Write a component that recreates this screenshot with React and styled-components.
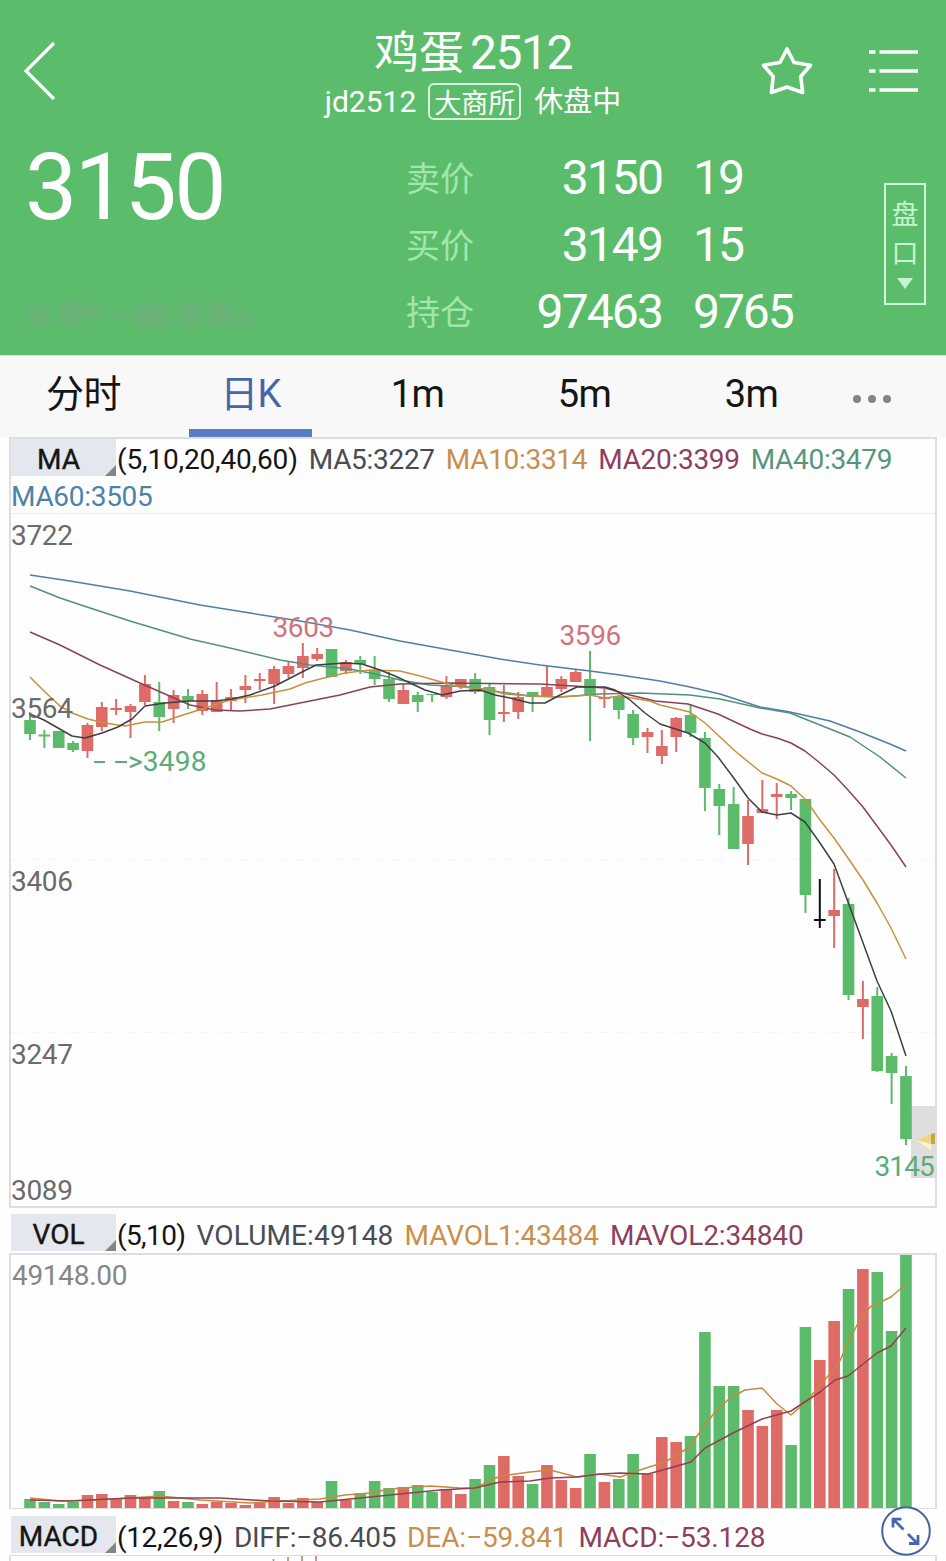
import React, { useState } from "react";
import styled, { createGlobalStyle } from "styled-components";

const UP = "#df6b66";
const DOWN = "#5bbb6b";
const FLAT = "#111111";

// 한 칸 간격과 첫 번째 봉의 x 좌표
const STEP = 14.36;
const FIRST_X = 30;
const barX = (i) => FIRST_X + STEP * i;

// [색, 몸통 위, 몸통 아래, 꼬리 위, 꼬리 아래, 거래량 막대 위]
const bars = [
  ["g", 720, 734, 714, 740, 1499],
  ["g", 734.5, 736.5, 730, 748, 1502],
  ["g", 731, 748, 731, 748, 1504],
  ["g", 743, 750, 741, 752, 1502],
  ["r", 725, 751, 723, 758, 1495],
  ["r", 707, 727, 702, 731, 1494],
  ["r", 708, 710, 699, 715, 1499],
  ["r", 706, 712, 704, 738, 1495],
  ["r", 684, 702, 675, 705, 1498],
  ["g", 702, 717, 682, 731, 1491],
  ["r", 695, 709, 690, 723, 1501],
  ["g", 696, 701, 689, 709, 1502],
  ["r", 694, 711, 690, 715, 1504],
  ["r", 700, 712, 682, 712, 1502],
  ["r", 697, 701, 689, 711, 1503],
  ["r", 686, 690, 675, 703, 1505],
  ["r", 679, 681, 673, 690, 1503],
  ["r", 669, 684, 666, 704, 1497],
  ["r", 666, 674, 661, 678, 1503],
  ["r", 656, 668, 643, 678, 1498],
  ["r", 654, 659, 648, 661, 1502],
  ["g", 649, 677, 649, 677, 1481],
  ["r", 662, 671, 660, 674, 1500],
  ["g", 660, 664, 656, 674, 1493],
  ["g", 671, 679, 656, 685, 1481],
  ["g", 679, 699, 672, 702, 1488],
  ["r", 690, 704, 684, 704, 1487],
  ["g", 695, 702, 692, 712, 1485],
  ["g", 694, 695, 694, 702, 1492],
  ["r", 686, 697, 676, 699, 1489],
  ["r", 679, 687, 679, 689, 1494],
  ["g", 679, 692, 673, 694, 1479],
  ["g", 687, 720, 683, 735, 1465],
  ["r", 712, 714, 685, 722, 1456],
  ["r", 697, 712, 692, 719, 1476],
  ["g", 692, 697, 692, 712, 1484],
  ["r", 687, 697, 666, 697, 1465],
  ["r", 679, 689, 676, 692, 1480],
  ["r", 672, 682, 670, 682, 1488],
  ["g", 679, 695, 651, 741, 1454],
  ["r", 697, 699, 689, 708, 1482],
  ["g", 696, 710, 695, 719, 1479],
  ["g", 714, 738, 710, 745, 1454],
  ["r", 732, 737, 728, 753, 1474],
  ["r", 746, 756, 730, 764, 1437],
  ["r", 718, 737, 717, 752, 1442],
  ["g", 715, 733, 704, 737, 1436],
  ["g", 738, 788, 732, 811, 1332],
  ["g", 789, 806, 784, 835, 1386],
  ["g", 804, 849, 787, 849, 1386],
  ["r", 816, 844, 800, 865, 1410],
  ["r", 809, 813, 780, 813, 1426],
  ["r", 794, 797, 783, 819, 1410],
  ["g", 794, 798, 791, 810, 1445],
  ["g", 799, 895, 799, 913, 1327],
  ["k", 919, 921, 879, 928, 1360],
  ["r", 910, 916, 869, 948, 1321],
  ["g", 904, 995, 898, 1000, 1289],
  ["r", 999, 1007, 981, 1039, 1269],
  ["g", 996, 1071, 987, 1072, 1272],
  ["g", 1056, 1073, 1053, 1104, 1331],
  ["g", 1076, 1139, 1066, 1145, 1255],
];

const candleColor = { g: DOWN, r: UP, k: FLAT };
const volumeColor = { g: DOWN, r: UP, k: UP };

const maLines = [
  {
    color: "#4f7fa8",
    points:
      "30,575 70,581 130,591 145,594 200,605 250,613 300,621 350,630 400,641 450,650 500,659 540,665 590,671 620,675 660,681 690,687 720,694 760,707 790,712 830,721 860,732 890,744 906,751",
  },
  {
    color: "#52917f",
    points:
      "30,586 60,598 90,608 130,621 160,630 190,639 230,648 280,660 310,665 350,669 380,675 400,680 430,685 470,687 500,692 530,696 560,697 600,694 640,693 690,695 720,699 760,708 790,713 820,725 850,737 880,757 906,778",
  },
  {
    color: "#8a4257",
    points:
      "30,632 60,645 100,665 140,683 165,694 190,705 215,710 240,711 270,709 290,705 310,701 340,695 370,687 400,684 450,683 540,684 590,687 605,688 630,695 655,701 688,704 718,714 750,729 762,734 777,738 791,743 805,751 820,763 834,775 848,790 863,807 877,826 891,845 906,867",
  },
  {
    color: "#c8913e",
    points:
      "30,677 45,692 60,706 72,713 88,719 105,723 125,726 145,722 162,722 180,716 205,708 230,700 262,695 290,689 305,683 320,679 345,673 370,670 400,671 420,676 445,683 460,687 475,688 490,690 505,694 530,696 560,697 590,695 605,698 620,696 650,701 660,705 690,712 705,723 720,737 735,751 762,773 777,779 791,786 805,799 820,820 834,838 848,858 863,880 877,903 891,928 906,959",
  },
  {
    color: "#3d4048",
    points:
      "30,714 44,720 58,728 72,736 85,738 102,733 118,727 132,719 145,706 165,703 190,701 215,701 232,699 250,695 275,686 300,673 316,665 345,663 362,664 380,670 395,676 410,683 425,690 442,695 460,691 480,690 495,695 510,698 530,703 545,703 560,695 577,687 605,687 615,690 630,700 645,713 660,724 688,733 705,743 718,757 733,777 748,798 762,812 777,815 791,813 805,822 820,843 834,864 848,902 862,940 877,981 891,1011 906,1056",
  },
];

const volumeLines = [
  {
    color: "#c88a3e",
    points:
      "30,1498 60,1501 100,1500 160,1496 200,1500 250,1503 280,1501 320,1499 345,1495 370,1493 390,1489 430,1486 460,1488 475,1488 500,1476 530,1472 550,1470 577,1477 600,1474 620,1477 640,1470 665,1462 688,1448 700,1432 715,1412 730,1398 745,1390 762,1388 777,1404 791,1415 805,1403 820,1385 838,1365 848,1343 858,1323 870,1307 891,1297 906,1284",
  },
  {
    color: "#93404d",
    points:
      "30,1500 70,1501 130,1498 220,1498 270,1501 320,1502 350,1499 400,1494 440,1490 475,1488 500,1482 530,1481 550,1478 577,1477 600,1474 620,1473 648,1474 670,1468 691,1462 705,1448 735,1432 762,1419 791,1411 820,1392 835,1380 848,1376 877,1353 891,1346 906,1328",
  },
];

const quotes = [
  { label: "卖价", price: "3150", count: "19" },
  { label: "买价", price: "3149", count: "15" },
  { label: "持仓", price: "97463", count: "9765" },
];

const tabs = ["分时", "日K", "1m", "5m", "3m"];

const Header = () => {
  return (
    <HeaderContainer>
      <NavBar>
        <BackButton aria-label="back">
          <svg width="36" height="62" viewBox="0 0 36 62">
            <path
              d="M32 3 L4 31 L32 59"
              fill="none"
              stroke="#fff"
              strokeWidth="3.2"
            />
          </svg>
        </BackButton>
        <TitleBox>
          <Title>
            <TitleName>鸡蛋</TitleName>
            <TitleNumber>2512</TitleNumber>
          </Title>
          <SubTitle>
            <Code>jd2512</Code>
            <Exchange>大商所</Exchange>
            <span>休盘中</span>
          </SubTitle>
        </TitleBox>
        <NavIcons>
          <svg width="54" height="52" viewBox="0 0 54 52">
            <path
              d="M27 4 L34 17.5 L50.5 20.3 L40.8 31.5 L42.6 47.5 L27 42 L11.4 47.5 L13.2 31.5 L3.5 20.3 L20 17.5 Z"
              fill="none"
              stroke="#fff"
              strokeWidth="3.6"
              strokeLinejoin="round"
            />
          </svg>
          <svg width="50" height="44" viewBox="0 0 50 44">
            <path
              d="M1 3H7.500M11.500 3H50M1 22H7.500M11.500 22H50M1 41H7.500M11.500 41H50"
              stroke="#fff"
              strokeWidth="3.6"
            />
          </svg>
        </NavIcons>
      </NavBar>
      <QuoteBox>
        <LastPriceBox>
          <LastPrice>3150</LastPrice>
          <svg width="240" height="46" viewBox="0 0 240 46">
            <filter id="smudge">
              <feGaussianBlur stdDeviation="3.5" />
            </filter>
            <g filter="url(#smudge)" fill="#6fae7d" opacity="0.75">
              <path d="M2 12l24 2 -4 22 -18 -4zM34 10l20 -2 6 12 -8 16 -20 -2zM58 13h22v8l-16 8zM82 20h26v6h-26zM108 14l32 -4 6 24 -34 2zM152 12l24 -2 -2 24 -18 2zM182 9l24 2 4 26 -26 -2zM212 18l18 6 -2 10 -16 2z" />
            </g>
          </svg>
        </LastPriceBox>
        <QuoteTable>
          {quotes.map((quote) => (
            <QuoteRow key={quote.label}>
              <QuoteLabel>{quote.label}</QuoteLabel>
              <QuotePrice>{quote.price}</QuotePrice>
              <QuoteCount>{quote.count}</QuoteCount>
            </QuoteRow>
          ))}
        </QuoteTable>
        <DepthButton>
          <span>盘</span>
          <span>口</span>
          <svg width="16" height="11" viewBox="0 0 16 11">
            <path d="M0 0H16L8 11Z" fill="#c4f5cd" />
          </svg>
        </DepthButton>
      </QuoteBox>
    </HeaderContainer>
  );
};

const Lines = ({ lines }) =>
  lines.map((line) => (
    <polyline
      key={line.color}
      points={line.points}
      fill="none"
      stroke={line.color}
      strokeWidth="1.5"
      strokeLinejoin="round"
    />
  ));

const PriceChart = () => {
  return (
    <ChartSvg width="924" height="692" viewBox="11 514 924 692">
      <g stroke="#f5f5f5" strokeDasharray="9 10">
        <path d="M11 859.500H935M11 1032.500H935" />
      </g>
      <rect x="911" y="1106" width="24" height="72" fill="#dedede" />
      {bars.map(([type, top, bottom, high, low], i) => (
        <g key={i} fill={candleColor[type]}>
          <rect x={barX(i) - 1} y={high} width="2" height={low - high} />
          <rect x={barX(i) - 5.8} y={top} width="11.6" height={bottom - top} />
        </g>
      ))}
      <Lines lines={maLines} />
      <path d="M916 1140 L931 1134 V1150 Z" fill="#fbf3d2" />
      <path d="M916 1140 L931 1134 V1144 Z" fill="#ecd680" />
      <path d="M931 1134 L935 1133 V1144 L931 1144 Z" fill="#c9a545" />
      <AxisText x="11" y="545">3722</AxisText>
      <AxisText x="11" y="718">3564</AxisText>
      <AxisText x="11" y="891">3406</AxisText>
      <AxisText x="11" y="1064">3247</AxisText>
      <AxisText x="11" y="1200">3089</AxisText>
      <MarkText x="272.500" y="637" $color="#d0737a">3603</MarkText>
      <MarkText x="559.500" y="645" $color="#d0737a">3596</MarkText>
      <path d="M94 762H105M115 762H127" stroke="#5cab78" strokeWidth="2" />
      <MarkText x="128" y="771" $color="#5cab78" $spacing={0.2}>&gt;3498</MarkText>
      <MarkText x="874.500" y="1176" $color="#5cab78" $spacing={-0.9}>3145</MarkText>
    </ChartSvg>
  );
};

const VolumeChart = () => {
  return (
    <ChartSvg width="924" height="253" viewBox="11 1255 924 253">
      {bars.map(([type, , , , , top], i) => (
        <rect
          key={i}
          x={barX(i) - 5.8}
          y={top}
          width="11.6"
          height={1508 - top}
          fill={volumeColor[type]}
        />
      ))}
      <Lines lines={volumeLines} />
      <VolumeText x="12" y="1285">49148.00</VolumeText>
    </ChartSvg>
  );
};

const App = () => {
  const [tab, setTab] = useState("日K");

  return (
    <>
      <GlobalStyle />
      <PageContainer>
        <Header />
        <TabBar>
          {tabs.map((name) => (
            <Tab key={name} $active={name === tab} onClick={() => setTab(name)}>
              {name}
            </Tab>
          ))}
          <MoreButton aria-label="more">
            <Dot />
            <Dot />
            <Dot />
          </MoreButton>
        </TabBar>

        <PricePanel>
          <Legend>
            <Chip>MA</Chip>
            <Param $spacing={-0.15}>(5,10,20,40,60)</Param>
            <Value $color="#4a4c55">MA5:3227</Value>
            <Value $color="#c98f4c">MA10:3314</Value>
            <Value $color="#8e3f5e">MA20:3399</Value>
            <Value $color="#57957f">MA40:3479</Value>
            <Value $color="#4d82a8" $first>MA60:3505</Value>
          </Legend>
          <PriceChart />
        </PricePanel>

        <OuterLegend>
          <Chip>VOL</Chip>
          <Param $spacing={-0.6}>(5,10)</Param>
          <Value $color="#4a4c55" $spacing={0.15}>VOLUME:49148</Value>
          <Value $color="#c98f4c" $spacing={-0.05}>MAVOL1:43484</Value>
          <Value $color="#8e3f5e" $spacing={-0.1}>MAVOL2:34840</Value>
        </OuterLegend>
        <VolumePanel>
          <VolumeChart />
        </VolumePanel>

        <OuterLegend $top={7}>
          <Chip>MACD</Chip>
          <Param $spacing={-0.35}>(12,26,9)</Param>
          <Value $color="#4a4c55">DIFF:−86.405</Value>
          <Value $color="#c98f4c" $spacing={-0.1}>DEA:−59.841</Value>
          <Value $color="#8e3f5e" $spacing={-0.1}>MACD:−53.128</Value>
          <ExpandButton aria-label="expand">
            <svg width="50" height="50" viewBox="0 0 50 50">
              <circle
                cx="25"
                cy="25"
                r="23.8"
                fill="#fff"
                stroke="#4a62a3"
                strokeWidth="2"
              />
              <path
                d="M22.500 23.500 L13 14M12 21.500V13.200H20.500M27 28L36 37M37 29V37.500H28"
                fill="none"
                stroke="#4766b0"
                strokeWidth="2.8"
              />
            </svg>
          </ExpandButton>
        </OuterLegend>
        <MacdPanel>
          <svg width="924" height="5" viewBox="11 1556 924 5">
            <path
              d="M273.500 1559V1561M288 1557V1561M302 1556V1561M316 1556V1561"
              stroke="#c0706c"
              strokeWidth="1.5"
            />
          </svg>
        </MacdPanel>
      </PageContainer>
    </>
  );
};

export default App;

const GlobalStyle = createGlobalStyle`
  * {
    box-sizing: border-box;
  }

  body {
    margin: 0;
    background-color: #fefefe;
    font-family: Roboto, "Noto Sans CJK SC", sans-serif;
  }

  button {
    border: none;
    padding: 0;
    background: none;
    font-family: inherit;
    color: inherit;
  }

  svg {
    display: block;
  }
`;

const PageContainer = styled.div`
  display: flex;
  flex-direction: column;
  width: 946px;
  height: 1561px;
  overflow: hidden;

  > * {
    flex-shrink: 0;
  }
`;

const HeaderContainer = styled.header`
  height: 355px;
  background-color: #5bbd6b;
  color: #fff;
`;

const NavBar = styled.div`
  display: grid;
  grid-template-columns: 200px 1fr 200px;
  height: 144px;
`;

const BackButton = styled.button`
  padding: 40px 0 0 22px;
  justify-self: start;
  align-self: start;
`;

const TitleBox = styled.div`
  display: flex;
  flex-direction: column;
  align-items: center;
  padding-top: 26px;
`;

const Title = styled.div`
  display: flex;
  align-items: center;
  height: 52px;
  line-height: 52px;
`;

const TitleName = styled.span`
  padding-top: 3px;
  font-size: 45px;
`;

const TitleNumber = styled.span`
  margin-left: 6px;
  padding-top: 1px;
  font-size: 48px;
  letter-spacing: -1.5px;
`;

const SubTitle = styled.div`
  display: flex;
  align-items: center;
  height: 46px;
  font-size: 29px;
  line-height: 38px;

  > span {
    padding-top: 2px;
  }
`;

const Code = styled.span`
  font-size: 30px;
`;

const Exchange = styled.span`
  height: 37px;
  margin: 0 13px 0 12px;
  padding: 0 4px;
  border: 2px solid #d9f7de;
  border-radius: 6px;
  font-size: 27px;
  line-height: 34px;
`;

const NavIcons = styled.div`
  display: flex;
  align-items: flex-start;
  justify-content: space-between;
  padding: 45px 28px 0 14px;

  svg:last-child {
    margin-top: 4px;
  }
`;

const QuoteBox = styled.div`
  display: flex;
`;

const LastPriceBox = styled.div`
  display: flex;
  flex-direction: column;
  justify-content: space-between;
  width: 406px;
  height: 194px;
  padding: 2px 0 0 25px;
`;

const LastPrice = styled.div`
  font-size: 93px;
  line-height: 84px;
  letter-spacing: -2.5px;
`;

const QuoteTable = styled.div`
  width: 478px;
`;

const QuoteRow = styled.div`
  display: grid;
  grid-template-columns: 96px 160px 1fr;
  align-items: center;
  height: 67px;
`;

const QuoteLabel = styled.span`
  padding-bottom: 3px;
  color: #a2e6ad;
  font-size: 34px;
`;

const QuotePrice = styled.span`
  text-align: right;
  font-size: 48px;
  letter-spacing: -1.9px;
`;

const QuoteCount = styled.span`
  padding-left: 31px;
  font-size: 48px;
  letter-spacing: -2.1px;
`;

const DepthButton = styled.button`
  display: flex;
  flex-direction: column;
  align-items: center;
  width: 42px;
  height: 122px;
  margin-top: 39px;
  padding-top: 11px;
  border: 2px solid #d3f8d9;
  color: #c4f5cd;
  font-size: 27px;
  line-height: 39px;

  svg {
    margin-top: 4px;
  }
`;

const TabBar = styled.nav`
  display: flex;
  height: 82px;
  border-top: 1px solid #c3f0ca;
  background-color: #f8f8f9;
`;

const Tab = styled.button`
  position: relative;
  width: 167px;
  padding-bottom: 6px;
  font-size: 38px;
  line-height: 48px;
  letter-spacing: -0.6px;
  color: ${({ $active }) => ($active ? "#4765a8" : "#151515")};

  &::after {
    content: "";
    display: ${({ $active }) => ($active ? "block" : "none")};
    position: absolute;
    left: 22px;
    bottom: 0;
    width: 123px;
    height: 8px;
    background-color: #5c7bc6;
  }
`;

const MoreButton = styled.button`
  display: flex;
  align-items: center;
  gap: 7px;
  padding: 5px 0 0 18px;
`;

const Dot = styled.span`
  width: 8px;
  height: 8px;
  border-radius: 50%;
  background-color: #858585;
`;

const PricePanel = styled.section`
  height: 771px;
  margin: 0 9px;
  border: 2px solid #dedede;
`;

const Legend = styled.div`
  position: relative;
  display: flex;
  flex-wrap: wrap;
  align-content: flex-start;
  height: 75px;
  border-bottom: 1px solid #ececec;
  font-size: 28px;
  line-height: 37px;
  white-space: nowrap;

  > span {
    position: relative;
    top: 2px;
  }
`;

const OuterLegend = styled(Legend)`
  height: 38px;
  margin: ${({ $top = 6 }) => $top}px 11px 0;
  border-bottom: none;

  > span {
    top: 3px;
  }
`;

const Chip = styled.div`
  position: relative;
  width: 105px;
  height: 37px;
  padding-right: 10px;
  background-color: #e5e7ee;
  color: #151515;
  line-height: 42px;
  text-align: center;
  -webkit-text-stroke: 0.4px #151515;

  &::after {
    content: "";
    position: absolute;
    right: 0;
    bottom: 0;
    border-left: 11px solid transparent;
    border-bottom: 11px solid #858585;
  }
`;

const Param = styled.span`
  padding-left: 1px;
  color: #151515;
  letter-spacing: ${({ $spacing }) => $spacing}px;
`;

const Value = styled.span`
  margin-left: ${({ $first }) => ($first ? 0 : 11)}px;
  color: ${({ $color }) => $color};
  letter-spacing: ${({ $spacing = -0.3 }) => $spacing}px;
`;

const ChartSvg = styled.svg`
  overflow: hidden;
`;

const AxisText = styled.text`
  fill: #6b6b6b;
  font-size: 28px;
  letter-spacing: -0.3px;
`;

const MarkText = styled.text`
  fill: ${({ $color }) => $color};
  font-size: 28px;
  letter-spacing: ${({ $spacing = -0.4 }) => $spacing}px;
`;

const VolumeText = styled.text`
  fill: #868686;
  font-size: 28px;
  letter-spacing: -0.3px;
`;

const VolumePanel = styled.section`
  height: 256px;
  margin: 1px 9px 0;
  border: 2px solid #dedede;
  border-bottom-width: 1px;
`;

const ExpandButton = styled.button`
  position: absolute;
  top: -10px;
  right: 4px;
`;

const MacdPanel = styled.section`
  height: 10px;
  margin: 1px 9px 0;
  border: 2px solid #dedede;
  border-top-width: 1px;
`;
